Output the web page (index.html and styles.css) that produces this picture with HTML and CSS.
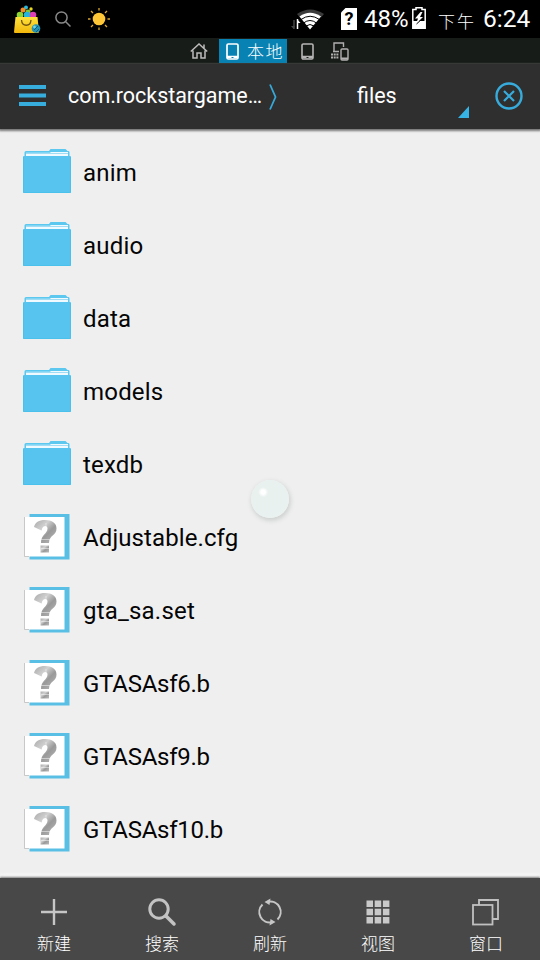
FILE: index.html
```
<!DOCTYPE html>
<html lang="zh-CN">
<head>
<meta charset="utf-8">
<title>files</title>
<link rel="stylesheet" href="styles.css">
</head>
<body>
<svg class="defs" width="0" height="0" aria-hidden="true">
  <defs>
    <linearGradient id="bag" x1="0" y1="0" x2="0" y2="1"><stop offset="0" stop-color="#ffe23c"/><stop offset="1" stop-color="#f2b70c"/></linearGradient>
    <linearGradient id="silver" x1="0" y1="0" x2="1" y2="1"><stop offset="0" stop-color="#aaa"/><stop offset=".35" stop-color="#d0d0d0"/><stop offset=".6" stop-color="#999"/><stop offset="1" stop-color="#bbb"/></linearGradient>
    <symbol id="folder" viewBox="0 0 48 45">
      <path d="M1.500 8V3.500Q1.500 2 3 2H26L27.500 0H42.500L44.500 2H45.500Q46.500 2 46.500 3.500V8Z" fill="#5cc8f0"/>
      <path d="M3 3.700H27L28 3H45V7H3Z" fill="#eefaff"/>
      <path d="M3 4.500H45" stroke="#8bd4f0" stroke-width=".8"/>
      <rect x="0" y="7" width="48" height="37" rx="1" fill="#57c4f0"/>
      <path d="M.5 8V43.500H47.500V8" fill="none" stroke="#46bfeb" stroke-width=".8"/>
    </symbol>
    <symbol id="unknown" viewBox="0 0 48 46">
      <path d="M6.500 0H46.500V45.500H6.500Z" fill="#5abfe4"/>
      <path d="M1.500 3H41.500V42.500H1.500Z" fill="#fff"/>
      <path d="M1.500 3V42.500H6" fill="none" stroke="#bbb" stroke-width=".8"/>
      <path d="M11 13C12 8.500 16 6 22 6C29 6 33.500 9 33.500 14.500C33.500 22 26 21 26 29H18C18 20 24.500 20 24.500 14.500C24.500 11 19.500 11 18.500 16.500Z" fill="url(#silver)"/>
      <path d="M17.500 31.500H26V38.500H17.500Z" fill="url(#silver)"/>
      <path d="M18 25.500H27M18 34.500H26M23 9V13" stroke="#fff" stroke-width=".8" opacity=".6"/>
    </symbol>
  </defs>
</svg>
<div class="screen">
  <header class="status">
    <svg class="bag" width="28" height="30" viewBox="0 0 28 30">
      <circle cx="12" cy="3.500" r="2" fill="#29b8dd"/><circle cx="17" cy="5" r="1.700" fill="#e8d820"/>
      <circle cx="9" cy="6" r="2.500" fill="#f58b22"/><circle cx="14" cy="8" r="2.500" fill="#83c836"/>
      <circle cx="6" cy="11" r="3.300" fill="#8ed62f"/><circle cx="13" cy="11" r="3.300" fill="#24b4dc"/><circle cx="19" cy="11" r="3.300" fill="#db40b5"/>
      <path d="M1.500 13H23.500L25 28Q25 29 23.500 29H1Q0 29 0 28Z" fill="url(#bag)"/>
      <path d="M7.500 16C8 23 16.500 23 17 16" fill="none" stroke="#6e5211" stroke-width="1.300"/>
      <circle cx="22" cy="24.500" r="4.300" fill="#2393b5"/><circle cx="20.500" cy="23" r="1.400" fill="#72d5e5"/><path d="M20 26l4-4M22 28l3-3" stroke="#125d7b"/>
    </svg>
    <svg class="find" width="17" height="17" viewBox="0 0 17 17" fill="none" stroke="#898989" stroke-width="1.500"><circle cx="6.500" cy="6.500" r="5.600"/><path d="M10.500 10.500L15.500 15.500"/></svg>
    <svg class="sun" width="22" height="22" viewBox="0 0 22 22"><circle cx="11" cy="11" r="6.300" fill="#ffc737"/><path d="M11 0V2.500M11 19.500V22M0 11H2.500M19.500 11H22M3 3L5 5M17 17L19 19M19 3L17 5M5 17L3 19" stroke="#d9a52d" stroke-width="1.300"/></svg>
    <span class="grow"></span>
    <svg class="wifi" width="34" height="22" viewBox="0 0 34 22">
      <path d="M6 5Q19 -4 33 5L30 8.500Q19 1 9 8.500Z" fill="#3a3a3a"/>
      <path d="M8.500 7.500Q19 0 30 7.500L19 20.500Z" fill="#fff"/>
      <path d="M10 10.500Q19 4 28.500 10.500M12.500 14Q19 9 25.500 14M15 17Q19 14 23 17" stroke="#000" stroke-width="1" fill="none"/>
      <path d="M3 11V20" stroke="#444" stroke-width="1.500"/><path d="M0 17H4L2.500 20Z" fill="#444"/>
      <path d="M6.500 10V20" stroke="#fff" stroke-width="1.500"/><path d="M6 10L9.500 14H6Z" fill="#fff"/>
    </svg>
    <span class="sim"><svg width="16" height="22" viewBox="0 0 16 22"><path d="M4.500 0H16V22H0V4.500Z" fill="#fff"/></svg><b>?</b></span>
    <span class="percent">48%</span>
    <svg class="battery" width="14" height="22" viewBox="0 0 14 22"><path d="M4 2.500V.7H10V2.500H13.200V21.200H.8V2.500Z" fill="#000" stroke="#fff" stroke-width="1.500"/><path d="M1 14H13V21H1Z" fill="#fff"/><path d="M8.500 5L3 11.500H6L4 17L11 10H8L10.500 5Z" fill="#fff"/><path d="M4.500 17L11 11" stroke="#000" stroke-width="1"/></svg>
    <span class="ampm">下午</span>
    <span class="clock">6:24</span>
  </header>
  <nav class="tabs">
    <svg width="18" height="16" viewBox="0 0 18 16" fill="none" stroke="#bbb" stroke-width="1.500"><path d="M.8 8.500L9 1L17.200 8.500M3 7.500V15H7V10H11V15H15V7.500M14 5V1.500"/></svg>
    <div class="tab-active"><svg width="13" height="17" viewBox="0 0 13 17"><rect x="1" y="1" width="11" height="15" rx="1.300" fill="none" stroke="#fff" stroke-width="1.700"/><path d="M1 14H12" stroke="#fff" stroke-width="2.500"/><path d="M5.500 14.500H7.500" stroke="#0882b2"/></svg><span>本地</span></div>
    <svg class="device" width="13" height="17" viewBox="0 0 13 17"><rect x="1" y="1" width="11" height="15" rx="1.300" fill="none" stroke="#b5b5b5" stroke-width="1.600"/><path d="M1 14H12" stroke="#b5b5b5" stroke-width="2.500"/><path d="M5.500 14.500H7.500" stroke="#181c18"/></svg>
    <svg class="network" width="18" height="19" viewBox="0 0 18 19" fill="none" stroke="#b0b0b0" stroke-width="1.400"><path d="M3 9V1H12.500V5M2 9.500H8"/><path d="M0 12.500H8M0 15.500H8" stroke-width="2.200" stroke-dasharray="2 .7"/><rect x="10" y="7" width="7" height="11" rx="1"/><path d="M10 16.500H17" stroke-width="2"/></svg>
  </nav>
  <div class="bar">
    <svg class="menu" width="27" height="22" viewBox="0 0 27 22"><path d="M0 2H27M0 10.500H27M0 19H27" stroke="#36addc" stroke-width="4"/></svg>
    <span class="crumb">com.rockstargame…</span>
    <svg class="chevron" width="8" height="26" viewBox="0 0 8 26"><path d="M1 .5L6.500 13L1 25.500" fill="none" stroke="#36a9d8" stroke-width="1.800"/></svg>
    <span class="current">files</span>
    <svg class="corner" width="11" height="12" viewBox="0 0 11 12"><path d="M11 0V12H0Z" fill="#36b4e5"/></svg>
    <svg class="close" width="28" height="28" viewBox="0 0 28 28" fill="none" stroke="#37acdc"><circle cx="14" cy="14" r="12.500" stroke-width="2.400"/><path d="M9 9L19 19M19 9L9 19" stroke-width="2.200"/></svg>
  </div>
  <main class="list">
    <div class="row"><svg class="folder"><use href="#folder"/></svg><span>anim</span></div>
    <div class="row"><svg class="folder"><use href="#folder"/></svg><span>audio</span></div>
    <div class="row"><svg class="folder"><use href="#folder"/></svg><span>data</span></div>
    <div class="row"><svg class="folder"><use href="#folder"/></svg><span>models</span></div>
    <div class="row"><svg class="folder"><use href="#folder"/></svg><span>texdb</span></div>
    <div class="row"><svg class="file"><use href="#unknown"/></svg><span class="long">Adjustable.cfg</span></div>
    <div class="row"><svg class="file"><use href="#unknown"/></svg><span>gta_sa.set</span></div>
    <div class="row"><svg class="file"><use href="#unknown"/></svg><span class="caps">GTASAsf6.b</span></div>
    <div class="row"><svg class="file"><use href="#unknown"/></svg><span class="caps">GTASAsf9.b</span></div>
    <div class="row"><svg class="file"><use href="#unknown"/></svg><span class="caps">GTASAsf10.b</span></div>
  </main>
  <footer class="tools">
    <div class="tool"><svg width="30" height="30" viewBox="0 0 30 30"><path d="M15 2V28M2 15H28" stroke="#c6c6c6" stroke-width="2.400"/></svg><span>新建</span></div>
    <div class="tool"><svg width="30" height="30" viewBox="0 0 30 30" fill="none" stroke="#c3c3c3"><circle cx="12" cy="12" r="9.200" stroke-width="3"/><path d="M19 19L27 27" stroke-width="3.500" stroke-linecap="round"/></svg><span>搜索</span></div>
    <div class="tool"><svg width="30" height="30" viewBox="0 0 30 30" fill="none" stroke="#c6c6c6" stroke-width="2"><path d="M7.500 7.500A10.500 10.500 0 0 0 17 25.300M22.500 22.500A10.500 10.500 0 0 0 13 4.700"/><path d="M9.500 5L15.500 1.500L14.500 8ZM20.500 25L14.500 28.500L15.500 22Z" fill="#c6c6c6" stroke="none"/></svg><span>刷新</span></div>
    <div class="tool"><svg width="30" height="30" viewBox="0 0 30 30"><path d="M3.500 3.500h6.500v6.500h-6.500zM11.700 3.500h6.500v6.500h-6.500zM19.900 3.500h6.500v6.500h-6.500zM3.500 11.700h6.500v6.500h-6.500zM11.700 11.700h6.500v6.500h-6.500zM19.900 11.700h6.500v6.500h-6.500zM3.500 19.900h6.500v6.500h-6.500zM11.700 19.900h6.500v6.500h-6.500zM19.900 19.900h6.500v6.500h-6.500z" fill="#c9c9c9"/></svg><span>视图</span></div>
    <div class="tool"><svg width="30" height="30" viewBox="0 0 30 30" fill="none" stroke="#c0c0c0" stroke-width="1.800"><rect x="2" y="8" width="19.500" height="19.500"/><path d="M8 8V3H27V22H21.500"/></svg><span>窗口</span></div>
  </footer>
  <div class="orb"></div>
</div>
</body>
</html>
```
FILE: styles.css
```
* { box-sizing: border-box; }
body { margin: 0; background: #efefef; font-family: Roboto, "Noto Sans CJK SC", sans-serif; }
svg { display: block; flex-shrink: 0; }
.defs { position: absolute; }
.screen { position: relative; width: 540px; height: 960px; display: flex; flex-direction: column; overflow: hidden; }
.status { height: 38px; background: #000; color: #fff; display: flex; align-items: center; padding: 0 10px 0 14px; }
.bag { margin-top: -1px; }
.find { margin-left: 13px; }
.sun { margin-left: 16px; }
.grow { flex: 1; }
.wifi { margin-right: 16px; margin-top: 2px; }
.sim { width: 16px; height: 22px; display: grid; place-items: center; margin-right: 7px; }
.sim > * { grid-area: 1 / 1; }
.sim b { color: #000; font-size: 18px; line-height: 22px; }
.percent { width: 48px; font-size: 24px; letter-spacing: 0; white-space: nowrap; }
.battery { margin-right: 12px; margin-top: -2px; }
.ampm { width: 45px; font: 300 17px "AR PL UKai CN", KaiTi, "Noto Sans CJK SC", serif; letter-spacing: 2px; margin-top: 3px; }
.clock { width: 47px; font-size: 24.500px; white-space: nowrap; margin-top: -1px; }
.tabs { height: 26px; background: #181c18; display: flex; align-items: center; padding-left: 190px; }
.tab-active { width: 68px; height: 24px; margin-left: 11px; background: #0882b2; color: #fff; display: flex; align-items: center; padding-left: 7px; gap: 8px; }
.tab-active span { font: 300 17px "AR PL UKai CN", KaiTi, "Noto Sans CJK SC", serif; letter-spacing: 1.500px; white-space: nowrap; line-height: 24px; }
.device { margin-left: 14px; }
.network { margin-left: 17px; }
.bar { position: relative; z-index: 1; height: 65px; background: #2f2f2f; color: #fff; display: flex; align-items: center; padding: 0 0 2px 19px; box-shadow: 0 1px 2px 1px #777; font-size: 21.500px; }
.crumb { width: 201px; margin-left: 22px; white-space: nowrap; letter-spacing: -.05px; }
.chevron { margin-top: 2px; }
.current { width: 39px; margin-left: 80px; }
.corner { margin: 32px 0 0 62px; }
.close { margin-left: 25.500px; }
.list { height: 749px; padding-top: 7px; background: #efefef; color: #050505; }
.row { height: 73px; display: flex; align-items: center; padding-left: 22.500px; font-size: 24px; letter-spacing: .2px; }
.row .long { letter-spacing: .1px; }
.row .caps { letter-spacing: -.25px; }
.row svg { width: 48px; height: 45px; margin-right: 12.500px; }
.row .folder { margin-top: -2px; }
.row .file { height: 46px; margin-top: -1px; }
.tools { position: relative; height: 82px; background: #484848; color: #fff; display: flex; box-shadow: 0 -1px 2px #777, 0 -3px 4px #fff; }
.tool { flex: 1; display: flex; flex-direction: column; align-items: center; padding-top: 19px; }
.tool span { font: 300 17px "AR PL UKai CN", KaiTi, "Noto Sans CJK SC", serif; line-height: 24px; margin-top: 4px; }
.orb { position: absolute; z-index: 2; left: 251px; top: 480px; width: 38px; height: 38px; border-radius: 50%; background: radial-gradient(ellipse at 32% 32%, #fff 0 2px, #e9f1ef 5px, #e8f1ef 65%, #edf4f2 100%); box-shadow: 1px 2px 4px 1px #d0d3d2; }
```
